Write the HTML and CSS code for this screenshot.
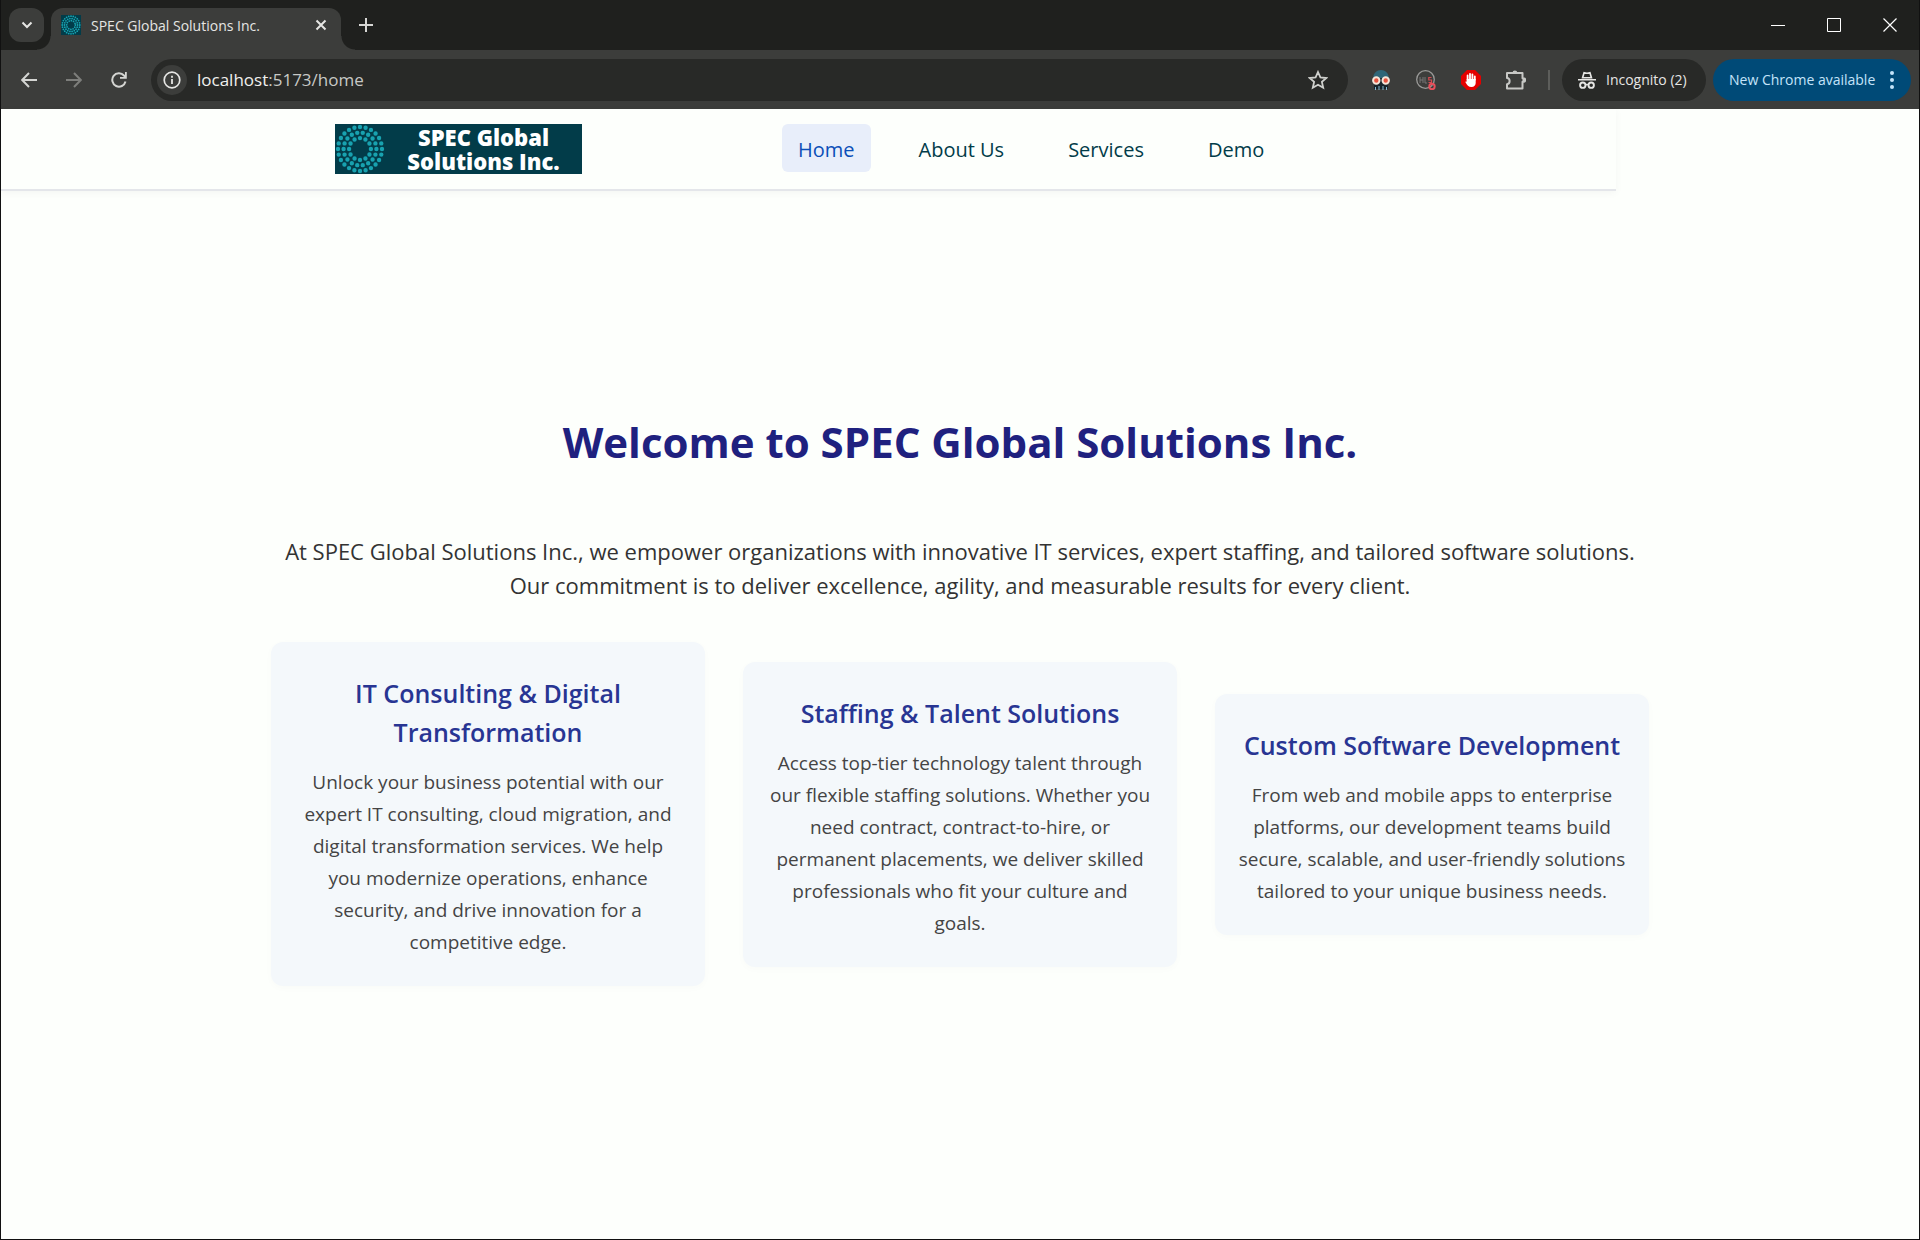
FILE: index.html
```html
<!DOCTYPE html>
<html lang="en">
<head>
<meta charset="utf-8">
<title>SPEC Global Solutions Inc.</title>
<link rel="stylesheet" href="styles.css">
</head>
<body>
<svg class="defs" aria-hidden="true">
  <symbol id="ring" viewBox="0 0 50 50">
    <g fill="none" stroke="#18a2b0" stroke-linecap="round" stroke-width="4.4">
      <circle cx="25" cy="25" r="22" pathLength="240" stroke-dasharray="0 10"/>
      <circle cx="25" cy="25" r="16.4" pathLength="180" stroke-dasharray="0 10"/>
      <circle cx="25" cy="25" r="10.9" pathLength="120" stroke-dasharray="0 10"/>
    </g>
  </symbol>
</svg>
<div class="window">
  <div class="tabstrip">
    <button class="tab-search" aria-label="Search tabs"><svg width="12" height="8" viewBox="0 0 12 8"><path d="M1.5 1.5 6 6l4.500-4.500" fill="none" stroke="#e6e6e4" stroke-width="2"/></svg></button>
    <div class="tab">
      <svg class="favicon" width="20" height="20" viewBox="0 0 50 50"><use href="#ring"/></svg>
      <span class="tab-title">SPEC Global Solutions Inc.</span>
      <button class="plain" aria-label="Close tab"><svg width="12" height="12" viewBox="0 0 12 12"><path d="m1.500 1.500 9 9m0-9-9 9" stroke="#e6e6e4" stroke-width="2"/></svg></button>
    </div>
    <button class="plain new-tab" aria-label="New tab"><svg width="14" height="14" viewBox="0 0 14 14"><path d="M7 0v14M0 7h14" stroke="#d6d6d4" stroke-width="2"/></svg></button>
    <div class="window-controls">
      <button class="plain" aria-label="Minimize"><svg width="14" height="14" viewBox="0 0 14 14"><path d="M0 7.500h14" stroke="#fff"/></svg></button>
      <button class="plain" aria-label="Maximize"><svg width="14" height="14" viewBox="0 0 14 14"><path d="M.5.5h13v13H.5z" fill="none" stroke="#fff"/></svg></button>
      <button class="plain" aria-label="Close"><svg width="14" height="14" viewBox="0 0 14 14"><path d="m.5.5 13 13m0-13-13 13" stroke="#fff" stroke-width="1.200"/></svg></button>
    </div>
  </div>
  <div class="toolbar">
    <div class="history">
      <button class="plain" aria-label="Back"><svg width="16" height="16" viewBox="0 0 16 16"><path d="M16 8H1.500M8 1 1.200 8 8 15" fill="none" stroke="#d4d5d2" stroke-width="2"/></svg></button>
      <button class="plain" aria-label="Forward"><svg width="16" height="16" viewBox="0 0 16 16"><path d="M0 8h14.500M8 1l6.800 7L8 15" fill="none" stroke="#7d7e7b" stroke-width="2"/></svg></button>
      <button class="plain" aria-label="Reload"><svg width="16" height="16" viewBox="0 0 16 16"><path d="M14.500 9.500A6.700 6.700 0 1 1 13 3.500l1.500 1.500" fill="none" stroke="#d4d5d2" stroke-width="2"/><path d="M15.800 0v6.800H9V5h5V0z" fill="#d4d5d2"/></svg></button>
    </div>
    <div class="omnibox">
      <button class="site-info" aria-label="Site information"><svg width="18" height="18" viewBox="0 0 18 18"><circle cx="9" cy="9" r="7.800" fill="none" stroke="#e6e6e4" stroke-width="1.700"/><path d="M9 8v5M9 4.800v2" stroke="#e6e6e4" stroke-width="1.800"/></svg></button>
      <a class="url" href="#home"><span class="host">localhost</span>:5173/home</a>
      <button class="plain" aria-label="Bookmark"><svg width="20" height="20" viewBox="0 0 20 20"><path d="m10 2 2.400 5.400 5.900.6-4.400 3.900 1.300 5.800L10 14.700l-5.200 3 1.300-5.800L1.700 8l5.900-.6z" fill="none" stroke="#cfd0cd" stroke-width="1.800"/></svg></button>
    </div>
    <div class="extensions">
      <button class="plain" aria-label="Masked reader extension"><svg width="20" height="20" viewBox="0 0 20 20"><path d="M2 9C2 3 6 0 10 0s8 3 8 9z" fill="#2f6678"/><path d="M3 8h14v11H3z" fill="#16242b"/><path d="M4.500 17v3m3.500-4v4m4-4v4m3.500-3v3" stroke="#86b9d0"/><circle cx="5.300" cy="10.500" r="3.200" fill="#e8533f" stroke="#f5e5d8" stroke-width="2"/><circle cx="14.700" cy="10.500" r="3.200" fill="#e8533f" stroke="#f5e5d8" stroke-width="2"/></svg></button>
      <button class="plain" aria-label="HLS extension"><svg width="20" height="20" viewBox="0 0 20 20"><circle cx="9.500" cy="9.500" r="8.800" fill="none" stroke="#9a9a98" stroke-width="1.300"/><path d="M4 7v6m3-6v6M4 10h3m2-3v6h2" fill="none" stroke="#777"/><path d="M15.500 7.500h-2.700V10h2.700v2.500h-3" fill="none" stroke="#d84a52" stroke-width="1.200"/><circle cx="16" cy="16.500" r="2.700" fill="none" stroke="#e84f5b" stroke-width="2"/></svg></button>
      <button class="plain" aria-label="Ad blocker"><svg width="20" height="20" viewBox="0 0 20 20"><path d="M6 0h8l6 6v8l-6 6H6l-6-6V6z" fill="#e40000"/><path d="M6.600 10V5.500m2.400 4V3.800m2.400 5.700V4.300m2.400 5.400V6.300" stroke="#fff" stroke-width="1.800" stroke-linecap="round"/><path d="M5.700 9h9v4c0 2.300-1.500 4-4.200 4-3 0-4.500-2-6.300-5.300l1.500-.2z" fill="#fff"/></svg></button>
      <button class="plain" aria-label="Extensions"><svg width="20" height="20" viewBox="0 0 20 20"><path d="M1 3h15.500v5.200h.9a1.800 1.800 0 0 1 0 3.600h-.9V18.500H1v-4.300c3.500-.3 3.500-6 0-6.300z" fill="none" stroke="#c7c8c5" stroke-width="2" stroke-linejoin="round"/><path d="M6.500 3a2.400 2.400 0 0 1 4.800 0zM16.500 8h1a2 2 0 0 1 0 4h-1z" fill="#c7c8c5"/></svg></button>
    </div>
    <span class="separator"></span>
    <button class="chip incognito"><svg width="18" height="18" viewBox="0 0 18 18"><path d="M0 8h18v1.600H0zM3.500 7.500 5.500.8 9 1.600l3.500-.8 2 6.700z" fill="#e6e6e4"/><path d="M6.500 3h5l.8 3H5.700z" fill="#282927"/><path d="M7.500 14c1-.8 2-.8 3 0" fill="none" stroke="#e6e6e4" stroke-width="1.500"/><circle cx="4.800" cy="14.200" r="2.700" fill="none" stroke="#e6e6e4" stroke-width="1.900"/><circle cx="13.200" cy="14.200" r="2.700" fill="none" stroke="#e6e6e4" stroke-width="1.900"/></svg><span>Incognito (2)</span></button>
    <button class="chip update"><span>New Chrome available</span><svg width="4" height="18" viewBox="0 0 4 18" fill="#c5e4fa"><circle cx="2" cy="2" r="2"/><circle cx="2" cy="9" r="2"/><circle cx="2" cy="16" r="2"/></svg></button>
  </div>
  <div class="page">
    <header class="site-header">
      <a class="logo" href="#home"><svg width="50" height="50" viewBox="0 0 50 50"><use href="#ring"/></svg><span>SPEC Global<br>Solutions Inc.</span></a>
      <nav class="nav">
        <a class="active" href="#home">Home</a>
        <a href="#about">About Us</a>
        <a href="#services">Services</a>
        <a href="#demo">Demo</a>
      </nav>
    </header>
    <main class="hero">
      <h1>Welcome to SPEC Global Solutions Inc.</h1>
      <p class="intro">At SPEC Global Solutions Inc., we empower organizations with innovative IT services, expert staffing, and tailored software solutions.<br>Our commitment is to deliver excellence, agility, and measurable results for every client.</p>
      <div class="cards">
        <section class="card">
          <h2>IT Consulting &amp; Digital<br>Transformation</h2>
          <p>Unlock your business potential with our<br>expert IT consulting, cloud migration, and<br>digital transformation services. We help<br>you modernize operations, enhance<br>security, and drive innovation for a<br>competitive edge.</p>
        </section>
        <section class="card">
          <h2>Staffing &amp; Talent Solutions</h2>
          <p>Access top-tier technology talent through<br>our flexible staffing solutions. Whether you<br>need contract, contract-to-hire, or<br>permanent placements, we deliver skilled<br>professionals who fit your culture and<br>goals.</p>
        </section>
        <section class="card">
          <h2>Custom Software Development</h2>
          <p>From web and mobile apps to enterprise<br>platforms, our development teams build<br>secure, scalable, and user-friendly solutions<br>tailored to your unique business needs.</p>
        </section>
      </div>
    </main>
  </div>
</div>
</body>
</html>
```
FILE: styles.css
```css
* { box-sizing: border-box; }

body {
  margin: 0;
  font-family: "Open Sans", "Noto Sans", sans-serif;
  background: #fdfffc;
}

button { font: inherit; border: 0; padding: 0; cursor: pointer; }
a { text-decoration: none; color: inherit; }
svg { display: block; flex: none; }
.defs { position: absolute; width: 0; height: 0; }

.window {
  min-height: 100vh;
  display: flex;
  flex-direction: column;
  border: 1px solid #111;
  border-top: 0;
}

.plain {
  display: flex;
  align-items: center;
  justify-content: center;
  background: none;
}

/* Browser tab strip */
.tabstrip {
  display: flex;
  align-items: center;
  height: 50px;
  padding: 0 22px 0 8px;
  background: #1f201e;
}
.tab-search {
  display: flex;
  align-items: center;
  justify-content: center;
  width: 35px;
  height: 34px;
  border-radius: 12px;
  background: #3c3d3b;
}
.tab {
  position: relative;
  display: flex;
  align-items: center;
  align-self: flex-end;
  gap: 10px;
  width: 290px;
  height: 42px;
  margin-left: 7px;
  padding: 0 14px 8px 10px;
  border-radius: 12px 12px 0 0;
  background: #3c3d3b;
}
.tab::before,
.tab::after {
  content: "";
  position: absolute;
  bottom: 0;
  width: 14px;
  height: 14px;
}
.tab::before { right: 100%; background: radial-gradient(circle at 0 0, transparent 13px, #3c3d3b 14px); }
.tab::after { left: 100%; background: radial-gradient(circle at 100% 0, transparent 13px, #3c3d3b 14px); }
.favicon { background: #023c49; }
.tab-title { flex: 1; font-size: 14px; color: #e6e6e4; white-space: nowrap; }
.new-tab { margin-left: 18px; }
.window-controls { display: flex; gap: 42px; margin-left: auto; }

/* Browser toolbar */
.toolbar {
  display: flex;
  align-items: center;
  height: 59px;
  padding: 0 8px 0 20px;
  background: #3c3d3b;
}
.history { display: flex; gap: 29px; margin-right: 24px; }
.omnibox {
  flex: 1;
  display: flex;
  align-items: center;
  gap: 10px;
  height: 42px;
  padding: 0 20px 0 6px;
  border-radius: 21px;
  background: #282927;
}
.site-info {
  display: flex;
  align-items: center;
  justify-content: center;
  width: 30px;
  height: 30px;
  border-radius: 50%;
  background: #3c3d3b;
}
.url { flex: 1; font-size: 17px; color: #c7c8c5; }
.host { color: #f0f0ee; }
.extensions { display: flex; gap: 25px; margin-left: 23px; }
.separator { width: 2px; height: 20px; margin: 0 12px 0 22px; background: #5d5e5b; }
.chip {
  display: flex;
  align-items: center;
  height: 42px;
  border-radius: 21px;
  font-size: 14px;
  white-space: nowrap;
}
.incognito { width: 144px; gap: 10px; padding: 0 16px; color: #e6e6e4; background: #282927; }
.update { width: 198px; justify-content: space-between; margin-left: 7px; padding: 0 17px 0 16px; color: #c5e4fa; background: #004a77; }

/* Site header */
.site-header {
  display: flex;
  align-items: flex-start;
  gap: 200px;
  height: 82px;
  margin-right: 303px;
  padding: 15px 0 0 334px;
  border-bottom: 2px solid #e4e6ea;
  box-shadow: 0 2px 8px rgba(0, 0, 0, 0.04);
}
.logo {
  display: flex;
  align-items: center;
  width: 247px;
  height: 50px;
  background: #023c49;
}
.logo span {
  flex: 1;
  font-size: 22px;
  line-height: 24px;
  font-weight: 800;
  text-align: center;
  color: #fff;
}
.nav { display: flex; gap: 32px; }
.nav a {
  padding: 10px 16px 6px;
  border-radius: 6px;
  font-size: 20px;
  line-height: 32px;
  font-weight: 500;
  color: #023c49;
}
.nav .active { color: #0b4fb8; background: #e8eefa; }

/* Landing content */
.hero {
  max-width: 1378px;
  margin: 0 auto;
  padding: 215px 0 64px;
  text-align: center;
}
.hero h1 {
  margin: 0 0 56px;
  font-size: 42px;
  line-height: 72px;
  font-weight: 700;
  color: #1f217f;
}
.intro {
  margin: 0 0 40px;
  font-size: 22px;
  line-height: 34px;
  color: #333;
}
.cards {
  display: grid;
  grid-template-columns: repeat(3, 1fr);
  align-items: center;
  gap: 38px;
}
.card {
  padding: 32px 16px 28px;
  border-radius: 12px;
  background: #f4f8fb;
  box-shadow: 0 2px 8px rgba(0, 0, 0, 0.02);
}
.card h2 {
  margin: 0 0 14px;
  font-size: 25px;
  line-height: 39px;
  font-weight: 600;
  color: #283593;
}
.card p {
  margin: 0;
  font-size: 19px;
  line-height: 32px;
  color: #444;
}
```
